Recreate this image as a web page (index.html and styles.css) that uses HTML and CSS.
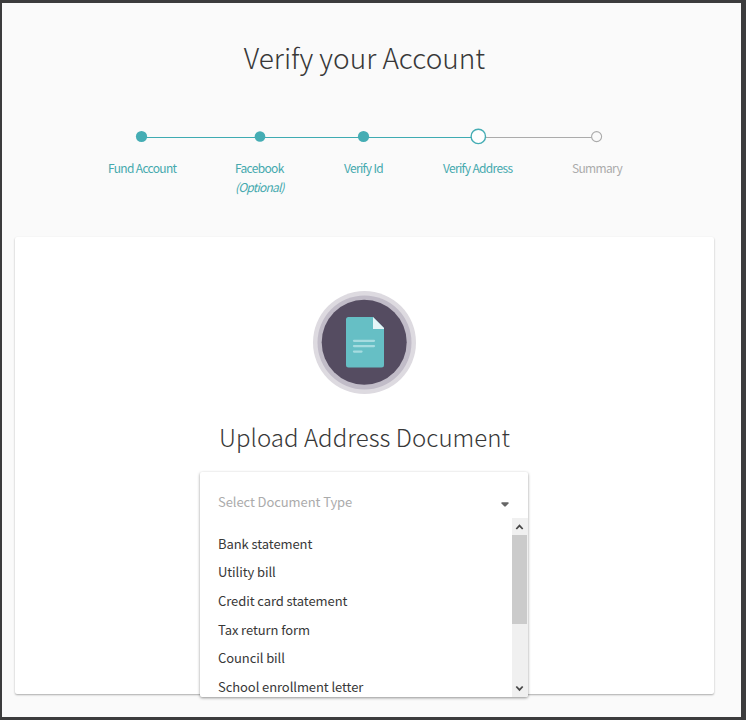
FILE: index.html
```html
<!DOCTYPE html>
<html lang="en">
<head>
<meta charset="utf-8">
<title>Verify your Account</title>
<link rel="stylesheet" href="styles.css">
</head>
<body>
<main class="page">
  <h1 class="title"><span>Verify your Account</span></h1>
  <svg class="track" width="500" height="20" viewBox="0 0 500 20">
    <rect x="11" y="11" width="337" height="1" fill="#3fabb2"/>
    <rect x="348" y="11" width="114" height="1" fill="#ababab"/>
    <g fill="#45adb4"><circle cx="11.500" cy="10.500" r="5.600"/><circle cx="130" cy="10.500" r="5.300"/><circle cx="233.500" cy="10.500" r="5.600"/></g>
    <circle cx="348.300" cy="10.400" r="7.200" fill="#fff" stroke="#45adb4" stroke-width="1.400"/>
    <circle cx="466.600" cy="10.600" r="5" fill="#fafafa" stroke="#ababab" stroke-width="1.100"/>
  </svg>
  <ol class="steps">
    <li>Fund Account</li>
    <li>Facebook<em>(Optional)</em></li>
    <li>Verify Id</li>
    <li>Verify Address</li>
    <li class="pending">Summary</li>
  </ol>
  <section class="card">
    <svg class="emblem" width="105" height="105" viewBox="0 0 105 105">
      <circle cx="52.500" cy="52.500" r="51.500" fill="#dddae0"/>
      <circle cx="52.500" cy="52.500" r="47" fill="#c1bcc8"/>
      <circle cx="52.200" cy="52.200" r="42.500" fill="#554c61"/>
      <path d="M36 27H61L72 38V75Q72 77.500 69.500 77.500H36.500Q34 77.500 34 75V29.500Q34 27 36.500 27Z" fill="#66bfc5"/>
      <path d="M61 27L72 38V39H61Z" fill="#e5f5f7"/>
      <path d="M42 50.800H62M42 56.100H62M42 61.600H49.500" stroke="#a6dce0" stroke-width="2.300" stroke-linecap="round"/>
    </svg>
    <h2 class="subtitle"><span>Upload Address Document</span></h2>
    <div class="select">
      <div class="select-head">
        <span>Select Document Type</span>
        <svg class="caret" width="8" height="5" viewBox="0 0 8 5"><path d="M.5.300H7.500V1.500L4.600 4.600H3.400L.5 1.500Z" fill="#666"/></svg>
      </div>
      <div class="select-body">
        <ul class="options">
          <li>Bank statement</li>
          <li>Utility bill</li>
          <li>Credit card statement</li>
          <li>Tax return form</li>
          <li>Council bill</li>
          <li>School enrollment letter</li>
        </ul>
        <div class="scrollbar">
          <svg width="16" height="17" viewBox="0 0 16 17"><path d="M4.300 11L7.500 7.600L10.700 11" fill="none" stroke="#484848" stroke-width="1.800"/></svg>
          <div class="thumb"></div>
          <svg width="16" height="17" viewBox="0 0 16 17"><path d="M4.300 6.500L7.500 9.900L10.700 6.500" fill="none" stroke="#484848" stroke-width="1.800"/></svg>
        </div>
      </div>
    </div>
  </section>
</main>
</body>
</html>
```
FILE: styles.css
```css
* { box-sizing: border-box; }
body {
  margin: 0;
  font-family: "Noto Sans CJK SC", "Open Sans", sans-serif;
  color: #383838;
}
.page {
  height: 720px;
  overflow: hidden;
  background: #fafafa;
  border: solid #3c3c3d;
  border-width: 3px 5px 3px 2px;
}
.title, .subtitle {
  margin: 0;
  width: 725px;
  text-align: center;
  font-weight: 300;
  white-space: nowrap;
}
.title { margin-top: 34px; font-size: 28px; line-height: 40px; }
.track { display: block; margin: 49px 0 0 128px; }
.steps {
  display: grid;
  grid-template-columns: 68px 49px 40px 70px 50px;
  gap: 59px;
  justify-content: start;
  height: 56px;
  margin: 12px 0 0 106px;
  padding: 0;
  list-style: none;
  font-size: 12px;
  line-height: 19px;
  letter-spacing: -0.67px;
  white-space: nowrap;
  color: #45a9ae;
}
.steps li:nth-child(n + 3) { padding-left: 1px; }
.steps em { display: block; letter-spacing: -0.8px; }
.steps .pending { color: #ababab; }
.card {
  width: 699px;
  height: 457px;
  margin: 23px 0 0 13px;
  padding-top: 53px;
  background: #fff;
  border-radius: 2px;
  box-shadow: 0 1px 2px rgba(0, 0, 0, .32);
}
.emblem { display: block; margin-left: 297px; }
.subtitle { width: 699px; margin-top: 22px; font-size: 24px; line-height: 40px; letter-spacing: 0.06px; }
.select {
  width: 328px;
  height: 225px;
  margin: 15px 0 0 185px;
  overflow: hidden;
  background: #fff;
  border-radius: 2px;
  box-shadow: 0 1px 3px rgba(0, 0, 0, .42);
  font-size: 13px;
  letter-spacing: -0.08px;
}
.select-head {
  display: flex;
  justify-content: space-between;
  align-items: center;
  height: 46px;
  padding: 12px 19px 0 18px;
  color: #ababab;
}
.caret { margin-top: 6px; }
.select-body { display: flex; justify-content: space-between; height: 179px; }
.options { margin: 11.8px 0 0; padding: 0 0 0 18px; list-style: none; white-space: nowrap; }
.options li { height: 28.6px; line-height: 28.6px; }
.scrollbar {
  display: flex;
  flex-direction: column;
  width: 16px;
  background: #f0f0f0;
}
.scrollbar svg:last-child { margin-top: auto; }
.thumb { width: 15px; height: 89px; background: #cbcbcb; }
```
